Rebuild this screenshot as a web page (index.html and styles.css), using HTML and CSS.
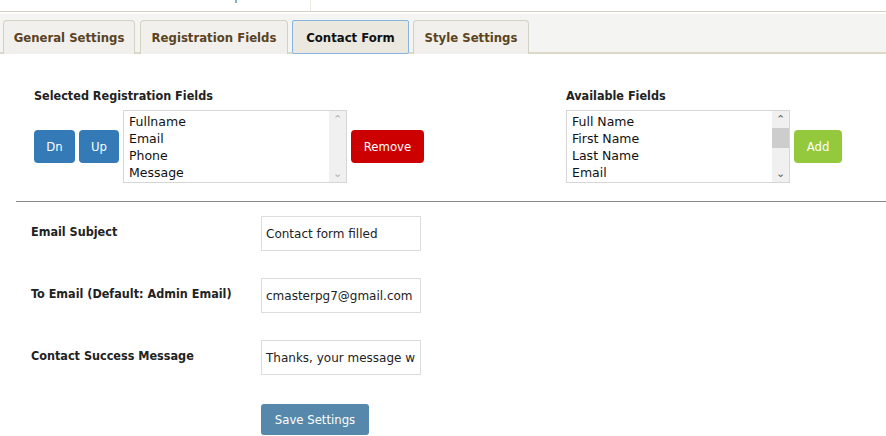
FILE: index.html
```html
<!DOCTYPE html>
<html>
<head>
<meta charset="utf-8">
<link rel="stylesheet" href="styles.css">
</head>
<body>
<div class="topstrip"><span class="dot"></span><span class="vline"></span></div>
<div class="tabbar">
  <div class="tab">General Settings</div>
  <div class="tab">Registration Fields</div>
  <div class="tab active">Contact Form</div>
  <div class="tab">Style Settings</div>
</div>
<div class="fields">
  <div class="group sel">
    <div class="gtitle">Selected Registration Fields</div>
    <div class="grow">
      <button class="btn blue dn">Dn</button>
      <button class="btn blue up">Up</button>
      <div class="listbox">
        <div class="items">
          <div>Fullname</div><div>Email</div><div>Phone</div><div>Message</div>
        </div>
        <div class="sbar">
          <span class="arr">&#8963;</span>
          <span class="track"></span>
          <span class="arr">&#8964;</span>
        </div>
      </div>
      <button class="btn red">Remove</button>
    </div>
  </div>
  <div class="group avail">
    <div class="gtitle">Available Fields</div>
    <div class="grow">
      <div class="listbox">
        <div class="items">
          <div>Full Name</div><div>First Name</div><div>Last Name</div><div>Email</div>
        </div>
        <div class="sbar dark">
          <span class="arr">&#8963;</span>
          <span class="track"><span class="thumb"></span></span>
          <span class="arr">&#8964;</span>
        </div>
      </div>
      <button class="btn green">Add</button>
    </div>
  </div>
</div>
<hr class="sep">
<div class="form">
  <div class="frow"><label>Email Subject</label><div class="inp">Contact form filled</div></div>
  <div class="frow"><label>To Email (Default: Admin Email)</label><div class="inp">cmasterpg7@gmail.com</div></div>
  <div class="frow"><label>Contact Success Message</label><div class="inp">Thanks, your message w</div></div>
  <div class="frow last"><label></label><button class="btn save">Save Settings</button></div>
</div>
</body>
</html>
```
FILE: styles.css
```css
* { box-sizing: border-box; }
html, body { margin: 0; padding: 0; background: #fff; }
body { font-family: "DejaVu Sans", Tahoma, sans-serif; font-size: 12px; color: #222; width: 886px; height: 436px; overflow: hidden; }

.topstrip { height: 12px; position: relative; border-bottom: 1px solid #d6d3c4; }
.dot { position: absolute; left: 235px; top: 0; width: 2px; height: 3px; background: #7fb0d8; }
.vline { position: absolute; left: 310px; top: 0; width: 1px; height: 11px; background: #eceae2; }

.tabbar { display: flex; gap: 4px; padding: 6px 0 0 3px; height: 42px; background: #f4f4f2; border-top: 2px solid #fff; border-bottom: 2px solid #dcd9c8; }
.tab { height: 34px; padding: 0; display: flex; align-items: center; justify-content: center; white-space: nowrap; font-family: "DejaVu Sans Condensed", "DejaVu Sans", sans-serif; font-weight: bold; font-size: 13px; color: #5b4322; background: #f1f0ec; border: 1px solid #d3d0c4; border-bottom: none; border-radius: 4px 4px 0 0; }
.tab:nth-child(1) { width: 132px; margin-right: 1px; }
.tab:nth-child(2) { width: 148px; }
.tab:nth-child(3) { width: 117px; }
.tab:nth-child(4) { width: 116px; }
.tab.active { background: #ebe8e0; border: 1px solid #86b6e0; border-radius: 2px; color: #111; }

.fields { display: flex; padding: 34px 0 0 34px; height: 147px; }
.group.sel { width: 532px; }
.gtitle { font-family: "DejaVu Sans Condensed", "DejaVu Sans", sans-serif; font-weight: bold; font-size: 12.5px; color: #222; height: 15px; line-height: 15px; margin-bottom: 7px; }
.grow { display: flex; align-items: center; gap: 4px; }
.listbox { display: flex; width: 224px; height: 73px; border: 1px solid #d6d6d6; background: #fff; }
.items { flex: 1; padding: 3px 0 0 5px; font-size: 12.5px; color: #111; }
.items div { height: 17px; line-height: 16px; }
.sbar { width: 17px; background: #f0f0f0; display: flex; flex-direction: column; align-items: center; }
.arr { height: 17px; line-height: 17px; font-size: 11px; color: #b0b0b0; }
.sbar.dark .arr { color: #606060; }
.track { flex: 1; width: 100%; position: relative; }
.thumb { position: absolute; left: 0; right: 0; top: 0; height: 20px; background: #cdcdcd; }

.btn { font-family: "DejaVu Sans Condensed", "DejaVu Sans", sans-serif; border: none; border-radius: 4px; color: #fff; font-size: 13px; height: 33px; padding: 0; cursor: pointer; }
.btn.blue { background: #337ab7; width: 41px; }
.btn.up { width: 40px; }
.btn.red { background: #cc0000; width: 73px; }
.btn.green { background: #94c83d; width: 48px; }

.sep { margin: 0 0 0 16px; border: none; border-top: 1px solid #888; height: 0; }

.form { padding: 14px 0 0 31px; }
.frow { display: flex; height: 62px; }
.frow.last { height: auto; }
.frow label { width: 230px; font-family: "DejaVu Sans Condensed", "DejaVu Sans", sans-serif; font-weight: bold; font-size: 12.5px; color: #222; padding-top: 8px; }
.inp { width: 160px; height: 35px; border: 1px solid #dcdcdc; padding: 0 4px; display: flex; align-items: center; font-size: 12px; color: #222; white-space: nowrap; overflow: hidden; }
.btn.save { background: #5588aa; width: 108px; height: 31px; border-radius: 3px; margin-top: 2px; font-size: 13px; }
```
